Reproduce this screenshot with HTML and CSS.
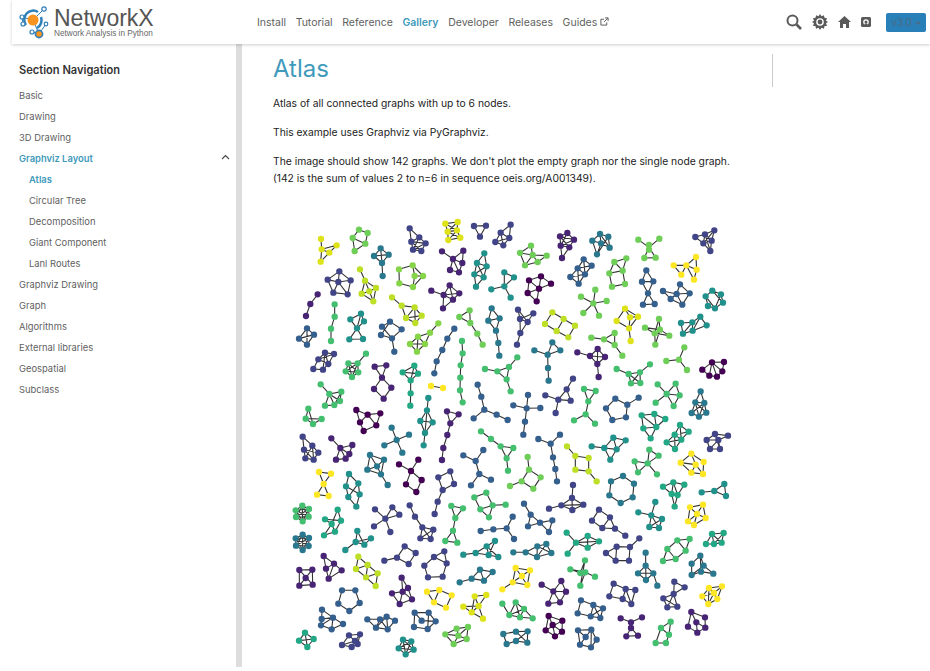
FILE: index.html
```html
<!DOCTYPE html>
<html>
	<head>
		<meta charset="utf-8">
		<title>Atlas — NetworkX</title>
		<link rel="stylesheet" href="styles.css">
	</head>
	<body>
		<header class="topbar">
			<a class="logo">
				<svg class="logo-mark" width="42" height="40" viewBox="12 2 42 40">
					<path class="logo-line" d="M33 20L44 9M33 20L22 17M22 17L23 24M33 20L39 34M39 34L32 32M39 34L46 24"/>
					<path class="logo-arc" d="M26 25A9 9 0 0 1 38 12M41 17A9 9 0 0 1 37 28"/>
					<circle class="logo-big" cx="33" cy="20" r="5.5"/>
					<circle class="logo-ring" cx="39" cy="34" r="3.6"/>
					<circle class="logo-ring-thin" cx="22" cy="17" r="2"/>
					<circle class="logo-ring-thin" cx="23" cy="24" r="2"/>
					<circle class="logo-ring-thin" cx="44" cy="9" r="2.2"/>
					<circle class="logo-ring-thin" cx="46" cy="24" r="1.8"/>
					<circle class="logo-ring-thin" cx="32" cy="32" r="2"/>
				</svg>
				<span class="logo-text">
					<strong>NetworkX</strong>
					<small>Network Analysis in Python</small>
				</span>
			</a>
			<nav class="topnav">
				<a>Install</a>
				<a>Tutorial</a>
				<a>Reference</a>
				<a class="active">Gallery</a>
				<a>Developer</a>
				<a>Releases</a>
				<a>Guides
					<svg class="ext" width="9" height="9" viewBox="0 0 10 10"><path d="M7.5 6v3H1V2.500h3.500M5.500 1H9v3.500M9 1L4.500 5.500"/></svg>
				</a>
			</nav>
			<div class="tools">
				<svg width="16" height="16" viewBox="0 0 16 16"><circle class="tool-line" cx="6.500" cy="6.500" r="5"/><path class="tool-line thick" d="M10.500 10.500L15 15"/></svg>
				<svg width="16" height="16" viewBox="0 0 16 16"><path class="tool-fill" d="M8 0l1.500 2.200L12 1.200l.4 2.600 2.600.4-1 2.500L16 8l-2 1.300 1 2.500-2.600.4-.4 2.600-2.500-1L8 16l-1.500-2.200-2.500 1-.4-2.600L1 11.800l1-2.500L0 8l2-1.300-1-2.500 2.600-.4.4-2.600 2.500 1z"/><circle class="tool-hole" cx="8" cy="8" r="3.800"/><circle class="tool-fill" cx="8" cy="8" r="2.400"/></svg>
				<svg width="13" height="12" viewBox="0 0 13 12"><path class="tool-fill" d="M6.500 0L13 6h-2v6H8V8H5v4H2V6H0z"/></svg>
				<svg width="10" height="10" viewBox="0 0 10 10"><rect class="tool-fill" width="10" height="10" rx="1.500"/><circle class="tool-hole" cx="5" cy="5" r="2.800"/><circle class="tool-fill" cx="5" cy="5" r="1.500"/><path class="tool-fill" d="M3.800 6.500h2.400V10H3.800z"/></svg>
				<button class="version">v3.0 <i class="caret"></i></button>
			</div>
		</header>

		<div class="page">
			<aside class="sidebar">
				<h4>Section Navigation</h4>
				<ul class="tree">
					<li>Basic</li>
					<li>Drawing</li>
					<li>3D Drawing</li>
					<li class="current open">Graphviz Layout
						<svg class="chev" width="9" height="6" viewBox="0 0 9 6"><path d="M1 5l3.500-3.500L8 5"/></svg>
					</li>
					<li class="sub current">Atlas</li>
					<li class="sub">Circular Tree</li>
					<li class="sub">Decomposition</li>
					<li class="sub">Giant Component</li>
					<li class="sub">Lanl Routes</li>
					<li>Graphviz Drawing</li>
					<li>Graph</li>
					<li>Algorithms</li>
					<li>External libraries</li>
					<li>Geospatial</li>
					<li>Subclass</li>
				</ul>
			</aside>

			<main class="content">
				<div class="article">
					<h1>Atlas</h1>
					<p>Atlas of all connected graphs with up to 6 nodes.</p>
					<p>This example uses Graphviz via PyGraphviz.</p>
					<p>The image should show 142 graphs. We don't plot the empty graph nor the single node graph. (142 is the sum of values 2 to n=6 in sequence oeis.org/A001349).</p>
				</div>
				<div class="toc-rule"></div>

				<svg class="atlas" width="500" height="467" viewBox="273 200 500 467">
					<!-- top left -->
					<g transform="translate(290 210) scale(.3333)">
						<g class="v95"><path class="e" d="M93 90L95 121L140 109L118 131L95 121L92 158L118 131"/><path class="n" d="M93 90h0M140 109h0M95 121h0M118 131h0M92 158h0"/></g>
						<g class="v8"><path class="e" d="M207 62L233 72L226 104L194 126L188 87L207 62M188 87L226 104"/><path class="n" d="M207 62h0M233 72h0M188 87h0M226 104h0M194 126h0"/></g>
						<g class="v4"><path class="e" d="M272 118L252 141L276 162L296 137L272 118L276 162L278 201M252 141L296 137"/><path class="n" d="M272 118h0M252 141h0M296 137h0M276 162h0M278 201h0"/></g>
						<g class="v2"><path class="e" d="M359 58L388 85L407 103L394 126L369 122L364 98L388 85M359 58L364 98L394 126M369 122L407 103M388 85L369 122M364 98L407 103"/><path class="n" d="M359 58h0M388 85h0M364 98h0M407 103h0M369 122h0M394 126h0"/></g>
						<g class="v95"><path class="e" d="M466 44L503 39L501 64L473 68L466 44L501 64L511 86L475 93L473 68L511 86M503 39L473 68M475 93L501 64"/><path class="n" d="M466 44h0M503 39h0M473 68h0M501 64h0M475 93h0M511 86h0"/></g>
						<g class="v2"><path class="e" d="M552 51L588 50L570 83L552 51"/><path class="n" d="M552 51h0M588 50h0M570 83h0"/></g>
						<g class="v2"><path class="e" d="M662 47L632 71L616 99L640 109L658 87L632 71M662 47L658 87M616 99L658 87M632 71L640 109"/><path class="n" d="M662 47h0M632 71h0M616 99h0M658 87h0M640 109h0"/></g>
						<g class="v1"><path class="e" d="M456 127L489 150L520 125L517 162L507 190L480 183L489 150L517 162M489 150L507 190"/><path class="n" d="M456 127h0M520 125h0M489 150h0M517 162h0M480 183h0M507 190h0"/></g>
						<g class="v5"><path class="e" d="M583 133L561 162L553 196L558 233L581 205L590 172L583 133M561 162L590 172L553 196L581 205L561 162"/><path class="n" d="M583 133h0M561 162h0M590 172h0M553 196h0M581 205h0M558 233h0"/></g>
						<g class="v5"><path class="e" d="M604 241L643 232L643 190L672 205L643 232L662 266"/><path class="n" d="M643 190h0M672 205h0M604 241h0M643 232h0M662 266h0"/></g>
						<g class="v2"><path class="e" d="M148 187L113 212L145 219L182 214L148 187L145 219L130 251L173 256L182 214M113 212L130 251M145 219L173 256"/><path class="n" d="M148 187h0M113 212h0M145 219h0M182 214h0M130 251h0M173 256h0"/></g>
						<g class="v9"><path class="e" d="M210 181L225 215L258 237L250 277L215 254L225 215L238 247L258 237M215 254L238 247L250 277"/><path class="n" d="M210 181h0M225 215h0M258 237h0M238 247h0M215 254h0M250 277h0"/></g>
						<g class="v8b"><path class="e" d="M327 181L368 169L374 201L369 234L328 223L327 181M368 169L399 201L369 234M374 201L399 201"/><path class="n" d="M327 181h0M368 169h0M374 201h0M399 201h0M328 223h0M369 234h0"/></g>
						<g class="v1"><path class="e" d="M424 245L461 258L479 229L508 253L489 272L459 298L461 258L508 253M479 229L489 272L461 258"/><path class="n" d="M424 245h0M479 229h0M461 258h0M508 253h0M489 272h0M459 298h0"/></g>
						<g class="v1"><path class="e" d="M83 256L61 285L48 321"/><path class="n" d="M83 256h0M61 285h0M48 321h0"/></g>
						<g class="v7"><path class="e" d="M134 286L134 323L123 359L123 396"/><path class="n" d="M134 286h0M134 323h0M123 359h0M123 396h0"/></g>
						<g class="v5"><path class="e" d="M213 314L181 331L201 358L213 314L222 337L201 358L178 391L219 390L201 358"/><path class="n" d="M213 314h0M181 331h0M222 337h0M201 358h0M178 391h0M219 390h0"/></g>
						<g class="v9"><path class="e" d="M306 265L335 290L374 295L395 320L376 342L348 327L335 290M374 295L348 327M374 295L376 342M395 320L348 327"/><path class="n" d="M306 265h0M335 290h0M374 295h0M395 320h0M348 327h0M376 342h0"/></g>
						<g class="v8"><path class="e" d="M539 304L508 324L541 342L539 304M541 342L562 374L578 407"/><path class="n" d="M539 304h0M508 324h0M541 342h0M562 374h0M578 407h0"/></g>
						<g class="v4"><path class="e" d="M605 298L595 335L629 328L605 298M595 335L618 365L629 328M618 365L625 402L628 440"/><path class="n" d="M605 298h0M595 335h0M629 328h0M618 365h0M625 402h0M628 440h0"/></g>
						<g class="v3"><path class="e" d="M276 353L300 338L335 361L306 388L273 378L300 338M276 353L306 388L313 428"/><path class="n" d="M276 353h0M300 338h0M335 361h0M273 378h0M306 388h0M313 428h0"/></g>
						<g class="v3"><path class="e" d="M51 358L27 389L72 377L51 358L51 407L72 377M27 389L51 407"/><path class="n" d="M51 358h0M27 389h0M72 377h0M51 407h0"/></g>
						<g class="v3"><path class="e" d="M493 359L472 389L457 423L440 457L433 493"/><path class="n" d="M493 359h0M472 389h0M457 423h0M440 457h0M433 493h0"/></g>
						<g class="v8b"><path class="e" d="M445 343L420 371L384 383L360 405L381 428L405 405L420 371M384 383L381 428M360 405L405 405M384 383L405 405"/><path class="n" d="M445 343h0M420 371h0M384 383h0M360 405h0M405 405h0M381 428h0"/></g>
						<g class="v7"><path class="e" d="M516 396L518 433L512 469L511 506L510 544L518 580"/><path class="n" d="M516 396h0M518 433h0M512 469h0M511 506h0M510 544h0M518 580h0"/></g>
						<g class="v2"><path class="e" d="M105 431L132 435L115 465L99 482L70 480L85 451L105 431L115 465M85 451L132 435M105 431L99 482M85 451L115 465"/><path class="n" d="M105 431h0M132 435h0M85 451h0M115 465h0M70 480h0M99 482h0"/></g>
						<g class="v7"><path class="e" d="M228 434L203 463L205 490L186 504L167 487L175 463L203 463L167 487M175 463L205 490M175 463L186 504M203 463L186 504M167 487L205 490"/><path class="n" d="M228 434h0M203 463h0M175 463h0M167 487h0M205 490h0M186 504h0"/></g>
						<g class="v1"><path class="e" d="M254 473L289 469L276 506L254 473M276 506L252 540L281 569L304 536L276 506"/><path class="n" d="M254 473h0M289 469h0M276 506h0M252 540h0M304 536h0M281 569h0"/></g>
						<g class="v6"><path class="e" d="M373 470L338 490L362 514L384 494L373 470L362 514L362 553L361 590M338 490L384 494"/><path class="n" d="M373 470h0M338 490h0M384 494h0M362 514h0M362 553h0M361 590h0"/></g>
						<g class="v10"><path class="e" d="M423 531L459 537"/><path class="n" d="M423 531h0M459 537h0"/></g>
						<g class="v7"><path class="e" d="M585 480L622 487L657 474L682 445M622 487L650 511L657 474M650 511L662 547"/><path class="n" d="M585 480h0M622 487h0M657 474h0M682 445h0M650 511h0M662 547h0"/></g>
						<g class="v3"><path class="e" d="M563 527L574 563L583 602L551 628M583 602L620 617L653 633"/><path class="n" d="M563 527h0M574 563h0M583 602h0M551 628h0M620 617h0M653 633h0"/></g>
						<g class="v7"><path class="e" d="M92 526L118 555L154 548L133 588L105 590L118 555L150 576L133 588L118 555M154 548L150 576"/><path class="n" d="M92 526h0M118 555h0M154 548h0M150 576h0M105 590h0M133 588h0"/></g>
						<g class="v7"><path class="e" d="M55 599L47 629L95 630L69 645L47 629M55 599L69 645"/><path class="n" d="M55 599h0M47 629h0M95 630h0M69 645h0"/></g>
						<g class="v0"><path class="e" d="M199 603L233 617L271 613L259 649L221 666L210 640L199 603M233 617L210 640M233 617L259 649"/><path class="n" d="M199 603h0M233 617h0M271 613h0M210 640h0M259 649h0M221 666h0"/></g>
						<g class="v5"><path class="e" d="M415 567L411 604L391 636L405 672L428 640L411 604L405 672L401 709M391 636L428 640"/><path class="n" d="M415 567h0M411 604h0M391 636h0M428 640h0M405 672h0M401 709h0"/></g>
						<g class="v1"><path class="e" d="M471 607L506 616L481 643L471 607M481 643L472 678L460 717L456 753"/><path class="n" d="M471 607h0M506 616h0M481 643h0M472 678h0M460 717h0M456 753h0"/></g>
						<g class="v4"><path class="e" d="M305 656L320 693L357 677M283 709L320 693L337 731"/><path class="n" d="M305 656h0M357 677h0M320 693h0M283 709h0M337 731h0"/></g>
						<g class="v7"><path class="e" d="M573 667L603 690L632 712L670 717L650 748L632 712M650 748L654 785"/><path class="n" d="M573 667h0M603 690h0M632 712h0M670 717h0M650 748h0M654 785h0"/></g>
					</g>

					<!-- top right -->
					<g transform="translate(510 210) scale(.3333)">
						<g class="v8"><path class="e" d="M63 110L30 132L45 169L83 159L110 140L68 138L63 110M30 132L68 138L45 169M68 138L83 159"/><path class="n" d="M63 110h0M30 132h0M68 138h0M110 140h0M45 169h0M83 159h0"/></g>
						<g class="v1"><path class="e" d="M150 82L172 72L192 92L178 115L152 110L150 82L178 115M172 72L152 110M150 82L192 92M152 110L192 92M152 110L156 147L178 115"/><path class="n" d="M150 82h0M172 72h0M192 92h0M152 110h0M178 115h0M156 147h0"/></g>
						<g class="v4"><path class="e" d="M270 75L247 95L261 136L273 103L299 116L295 83L270 75L273 103L247 95M295 83L261 136M270 75L299 116"/><path class="n" d="M270 75h0M247 95h0M295 83h0M273 103h0M299 116h0M261 136h0"/></g>
						<g class="v8"><path class="e" d="M385 92L417 115L448 89M417 115L403 147L437 146L417 115"/><path class="n" d="M417 108h0M417 122h0M385 92h0M448 89h0M403 147h0M437 146h0"/></g>
						<g class="v2"><path class="e" d="M613 64L585 76L556 84L580 103L601 126L605 95L613 64L580 103L585 76L605 95L580 103M585 76L601 126"/><path class="n" d="M613 64h0M585 76h0M556 84h0M605 95h0M580 103h0M601 126h0"/></g>
						<g class="v10"><path class="e" d="M558 144L529 169L491 169L514 197L529 169L560 182L558 144M529 169L552 212L560 182"/><path class="n" d="M558 144h0M491 169h0M529 169h0M560 182h0M514 197h0M552 212h0"/></g>
						<g class="v3"><path class="e" d="M221 151L203 178L181 204L206 224L225 196L245 170L221 151L225 196M203 178L245 170M203 178L225 196L181 204M203 178L206 224"/><path class="n" d="M221 151h0M203 178h0M245 170h0M181 204h0M225 196h0M206 224h0"/></g>
						<g class="v8"><path class="e" d="M349 148L313 159L298 193L306 233L345 225L338 185L349 148M313 159L338 185L298 193"/><path class="n" d="M349 148h0M313 159h0M338 185h0M298 193h0M306 233h0M345 225h0"/></g>
						<g class="v3"><path class="e" d="M409 184L396 218L414 253L430 217L409 184M396 218L430 217M414 253L399 287L434 285L414 253"/><path class="n" d="M409 184h0M396 218h0M430 217h0M414 253h0M399 287h0M434 285h0"/></g>
						<g class="v0"><path class="e" d="M57 214L93 202L123 224L87 239L93 202M57 214L87 239L53 252L57 214M53 252L80 277L87 239"/><path class="n" d="M57 214h0M93 202h0M123 224h0M53 252h0M87 239h0M80 277h0"/></g>
						<g class="v3"><path class="e" d="M459 246L500 255L510 226L539 253L517 287L482 270L459 246M482 270L500 255L539 253M500 255L517 287"/><path class="n" d="M459 246h0M510 226h0M539 253h0M482 270h0M500 255h0M517 287h0"/></g>
						<g class="v5"><path class="e" d="M607 245L633 256L639 281L615 298L594 291L587 262L607 245M607 245L639 281M633 256L615 298M587 262L615 298"/><path class="n" d="M607 245h0M587 262h0M633 256h0M594 291h0M639 281h0M615 298h0"/></g>
						<g class="v8"><path class="e" d="M256 242L250 283L213 263M290 276L250 283L220 312M250 283L267 320"/><path class="n" d="M256 242h0M213 263h0M290 276h0M250 283h0M220 312h0M267 320h0"/></g>
						<g class="v2"><path class="e" d="M24 302L30 330L53 339L24 302M70 313L53 339L31 372L30 330L70 313M31 372L21 407"/><path class="n" d="M24 302h0M70 313h0M53 339h0M30 330h0M31 372h0M21 407h0"/></g>
						<g class="v9"><path class="e" d="M127 310L161 330L195 350L175 385L140 366L105 345L127 310M161 330L140 366"/><path class="n" d="M127 310h0M161 330h0M105 345h0M195 350h0M140 366h0M175 385h0"/></g>
						<g class="v95"><path class="e" d="M345 299L384 323L360 325L345 299L320 336L357 358L362 396M360 325L357 358L384 323"/><path class="n" d="M345 299h0M384 323h0M360 325h0M320 336h0M357 358h0M362 396h0"/></g>
						<g class="v8"><path class="e" d="M447 330L434 373L405 356L450 362L478 380L434 373L436 407L450 362L447 330"/><path class="n" d="M447 330h0M405 356h0M450 362h0M434 373h0M478 380h0M436 407h0"/></g>
						<g class="v5"><path class="e" d="M571 323L547 340L513 342L519 374L548 365L590 349L571 323L548 365L547 340L519 374"/><path class="n" d="M571 323h0M513 342h0M547 340h0M590 349h0M519 374h0M548 365h0"/></g>
						<g class="v8"><path class="e" d="M244 386L282 391L314 372L314 408L282 391M314 408L337 440"/><path class="n" d="M244 386h0M282 391h0M314 372h0M314 408h0M337 440h0"/></g>
						<g class="v4"><path class="e" d="M127 400L113 437L151 424L127 400M73 424L113 437L114 477L116 515"/><path class="n" d="M127 400h0M73 424h0M113 437h0M151 424h0M114 477h0M116 515h0"/></g>
						<g class="v1"><path class="e" d="M202 430L240 441L263 420L285 444L262 465L240 441L285 444M263 420L262 465L266 504"/><path class="n" d="M263 420h0M202 430h0M240 441h0M285 444h0M262 465h0M266 504h0"/></g>
						<g class="v8"><path class="e" d="M523 415L507 452L469 456M507 452L531 483"/><path class="n" d="M523 415h0M469 456h0M507 452h0M531 483h0"/></g>
						<g class="v0"><path class="e" d="M606 460L642 459L637 487L621 503L598 500L577 482L606 460L637 487M606 460L598 500M606 460L621 503"/><path class="n" d="M606 460h0M642 459h0M577 482h0M637 487h0M598 500h0M621 503h0"/></g>
						<g class="v7"><path class="e" d="M320 480L356 495L390 490L420 466M356 495L363 523L391 522L390 490L363 523M356 495L391 522"/><path class="n" d="M420 466h0M320 480h0M390 490h0M356 495h0M363 523h0M391 522h0"/></g>
						<g class="v2"><path class="e" d="M189 509L170 541L145 572L106 559M170 541L182 575L145 572L137 612"/><path class="n" d="M189 509h0M170 541h0M106 559h0M145 572h0M182 575h0M137 612h0"/></g>
						<g class="v7"><path class="e" d="M222 540L257 546L235 577L222 540M235 577L227 616L192 634M227 616L255 644"/><path class="n" d="M222 540h0M257 546h0M235 577h0M227 616h0M192 634h0M255 644h0"/></g>
						<g class="v7"><path class="e" d="M443 526L470 555L497 524L509 559L491 591L470 555L509 559M470 555L437 581"/><path class="n" d="M443 526h0M497 524h0M470 555h0M509 559h0M437 581h0M491 591h0"/></g>
						<g class="v4"><path class="e" d="M572 547L556 580L545 612L567 623L589 611L583 582L572 547M556 580L583 582L545 612M556 580L589 611M556 580L567 623M583 582L567 623"/><path class="n" d="M572 547h0M556 580h0M583 582h0M545 612h0M589 611h0M567 623h0"/></g>
						<g class="v3"><path class="e" d="M54 558L50 598L45 638L40 677M10 589L50 598L91 597"/><path class="n" d="M54 558h0M10 589h0M50 598h0M91 597h0M45 638h0M40 677h0"/></g>
						<g class="v3"><path class="e" d="M386 566L352 587L348 625L307 633L288 598L316 569L352 587"/><path class="n" d="M386 566h0M352 587h0M316 569h0M288 598h0M348 625h0M307 633h0"/></g>
						<g class="v6"><path class="e" d="M395 619L433 615L466 630L439 654L422 688L400 658L395 619L439 654L433 615M400 658L439 654"/><path class="n" d="M395 619h0M433 615h0M466 630h0M400 658h0M439 654h0M422 688h0"/></g>
					</g>

					<!-- bottom right -->
					<g transform="translate(510 430) scale(.3333)">
						<g class="v6"><path class="e" d="M510 -12L536 8L514 32L495 60L470 40L494 17L510 -12L514 32L494 17L495 60M536 8L494 17M470 40L514 32"/><path class="n" d="M510 -12h0M536 8h0M470 40h0M494 17h0M514 32h0M495 60h0"/></g>
						<g class="v2"><path class="e" d="M615 15L654 20L625 33L600 60L590 33L615 15L630 60L625 33L615 15M590 33L625 33M600 60L630 60"/><path class="n" d="M615 15h0M654 20h0M590 33h0M625 33h0M600 60h0M630 60h0"/></g>
						<g class="v3"><path class="e" d="M150 17L122 44L85 30M122 44L129 85L136 120L141 157"/><path class="n" d="M150 17h0M85 30h0M122 44h0M129 85h0M136 120h0M141 157h0"/></g>
						<g class="v9"><path class="e" d="M171 52L196 81L236 87L236 127L196 122L196 81M236 127L260 157"/><path class="n" d="M171 52h0M196 81h0M236 87h0M196 122h0M236 127h0M260 157h0"/></g>
						<g class="v5"><path class="e" d="M245 52L283 57L310 26L347 34L320 61L310 26M283 57L320 61L301 92L283 57"/><path class="n" d="M310 26h0M347 34h0M245 52h0M283 57h0M320 61h0M301 92h0"/></g>
						<g class="v7"><path class="e" d="M418 62L446 80L413 103L418 62M374 97L413 103L384 130L374 97M413 103L441 136"/><path class="n" d="M418 62h0M446 80h0M374 97h0M413 103h0M384 130h0M441 136h0"/></g>
						<g class="v10"><path class="e" d="M544 74L512 101L544 131L579 135L581 99L544 74L557 107L579 135M557 107L544 131M512 101L557 107"/><path class="n" d="M544 74h0M512 101h0M581 99h0M557 107h0M544 131h0M579 135h0"/></g>
						<g class="v8"><path class="e" d="M53 84L57 122L92 145L70 179L35 157L57 122M35 157L0 171"/><path class="n" d="M53 84h0M57 122h0M92 145h0M35 157h0M70 179h0M0 171h0"/></g>
						<g class="v4"><path class="e" d="M339 141L372 164L368 205L332 222L298 199L303 157L339 141"/><path class="n" d="M339 141h0M303 157h0M372 164h0M298 199h0M368 205h0M332 222h0"/></g>
						<g class="v6"><path class="e" d="M490 160L459 173L485 195L503 198L523 167L490 160L485 195L494 233L503 198L490 160"/><path class="n" d="M490 160h0M459 173h0M523 167h0M485 195h0M503 198h0M494 233h0"/></g>
						<g class="v5"><path class="e" d="M575 190L613 186L643 165L648 201L613 186"/><path class="n" d="M643 165h0M575 190h0M613 186h0M648 201h0"/></g>
						<g class="v2"><path class="e" d="M189 168L186 207L154 229L117 239M154 229L220 227L186 207L187 243L154 229M187 243L220 227"/><path class="n" d="M189 168h0M186 207h0M117 239h0M154 229h0M220 227h0M187 243h0"/></g>
						<g class="v10"><path class="e" d="M579 227L540 235L534 277L552 288L587 267L579 227L561 255L540 235M561 255L587 267M561 255L552 288M561 255L534 277"/><path class="n" d="M579 227h0M540 235h0M561 255h0M587 267h0M534 277h0M552 288h0"/></g>
						<g class="v5"><path class="e" d="M436 219L424 259L385 250M424 259L456 270L447 297L418 294L424 259L447 297M456 270L418 294"/><path class="n" d="M436 219h0M385 250h0M424 259h0M456 270h0M418 294h0M447 297h0"/></g>
						<g class="v3"><path class="e" d="M42 224L62 257L90 281L127 274L117 309L90 281L54 292L62 257"/><path class="n" d="M42 224h0M62 257h0M127 274h0M90 281h0M54 292h0M117 309h0"/></g>
						<g class="v2"><path class="e" d="M267 242L300 265L315 299L346 320M267 242L246 275L277 297L315 299M300 265L277 297"/><path class="n" d="M267 242h0M300 265h0M246 275h0M277 297h0M315 299h0M346 320h0"/></g>
						<g class="v3"><path class="e" d="M8 263L-10 298L-50 301L-88 306M-10 298L12 330"/><path class="n" d="M8 263h0M-10 298h0M-50 301h0M-88 306h0M12 330h0"/></g>
						<g class="v7"><path class="e" d="M539 330L502 334L472 360L459 396L497 390L472 360M502 334L527 365L539 330M527 365L497 390"/><path class="n" d="M539 330h0M502 334h0M472 360h0M527 365h0M497 390h0M459 396h0"/></g>
						<g class="v6"><path class="e" d="M641 312L606 315L588 345L612 345L635 341L641 312L612 345L606 315L635 341"/><path class="n" d="M641 312h0M606 315h0M588 345h0M612 345h0M635 341h0"/></g>
						<g class="v6"><path class="e" d="M170 311L198 341L233 321L267 337L233 356L198 341L267 337M198 341L173 374M233 321L233 356"/><path class="n" d="M170 311h0M233 321h0M198 341h0M267 337h0M173 374h0M233 356h0"/></g>
						<g class="v2"><path class="e" d="M388 328L360 354L320 353L288 372L317 395L357 395L360 354M320 353L317 395"/><path class="n" d="M388 328h0M360 354h0M320 353h0M288 372h0M317 395h0M357 395h0"/></g>
						<g class="v4"><path class="e" d="M10 370L47 370L82 352L109 345L124 372L81 384L47 370M82 352L81 384M82 352L124 372M109 345L81 384"/><path class="n" d="M109 345h0M82 352h0M47 370h0M10 370h0M124 372h0M81 384h0"/></g>
						<g class="v4"><path class="e" d="M407 371L407 410L384 433L408 453L430 433L407 410L408 453M384 433L430 433L442 470"/><path class="n" d="M407 371h0M407 410h0M384 433h0M430 433h0M408 453h0M442 470h0"/></g>
						<g class="v4"><path class="e" d="M571 380L545 404L545 438L573 428L610 434L581 410L571 380L573 428L581 410L545 438"/><path class="n" d="M571 380h0M581 410h0M545 404h0M573 428h0M610 434h0M545 438h0"/></g>
						<g class="v7"><path class="e" d="M225 394L211 432L181 421L226 430L255 443M226 430L211 470L225 394"/><path class="n" d="M225 394h0M181 421h0M211 432h0M226 430h0M255 443h0M211 470h0"/></g>
						<g class="v10"><path class="e" d="M17 417L60 424L52 468L8 460L17 417L52 468M60 424L8 460L-23 481"/><path class="n" d="M17 417h0M60 424h0M36 441h0M8 460h0M52 468h0M-23 481h0"/></g>
						<g class="v1"><path class="e" d="M154 456L130 487L95 467M130 487L168 488L150 520L115 524L130 487L150 520M154 456L168 488"/><path class="n" d="M154 456h0M95 467h0M130 487h0M168 488h0M115 524h0M150 520h0"/></g>
						<g class="v2"><path class="e" d="M311 464L347 480L376 483L364 525L338 510L298 502L311 464M347 480L338 510M347 480L364 525"/><path class="n" d="M311 464h0M347 480h0M376 483h0M298 502h0M338 510h0M364 525h0"/></g>
						<g class="v2"><path class="e" d="M493 458L524 475L491 495L493 458M491 495L460 508L472 535L502 533L491 495L472 535M460 508L502 533"/><path class="n" d="M493 458h0M524 475h0M491 495h0M460 508h0M472 535h0M502 533h0"/></g>
						<g class="v10"><path class="e" d="M636 472L597 477L577 502L595 525L622 510L636 472L612 492L597 477L622 510L612 492L595 525L597 477M577 502L612 492"/><path class="n" d="M636 472h0M597 477h0M612 492h0M577 502h0M622 510h0M595 525h0"/></g>
						<g class="v7"><path class="e" d="M-23 524L-2 558L30 565L68 568L42 540L17 520L30 565L42 540L-2 558L17 520"/><path class="n" d="M17 520h0M42 540h0M-23 524h0M-2 558h0M30 565h0M68 568h0"/></g>
						<g class="v3"><path class="e" d="M213 514L250 528L279 538L271 567L242 562L203 553L213 514M250 528L242 562L279 538M250 528L271 567"/><path class="n" d="M213 514h0M250 528h0M279 538h0M203 553h0M242 562h0M271 567h0"/></g>
						<g class="v0"><path class="e" d="M116 561L157 575L156 608L135 622L107 604L116 561L128 588L156 608M128 588L135 622M157 575L107 604"/><path class="n" d="M116 561h0M157 575h0M128 588h0M107 604h0M156 608h0M135 622h0"/></g>
						<g class="v1"><path class="e" d="M332 568L363 580L396 565M363 580L363 597L349 622L384 620L363 597"/><path class="n" d="M332 568h0M396 565h0M363 580h0M363 597h0M349 622h0M384 620h0"/></g>
						<g class="v7"><path class="e" d="M482 578L453 597L477 617L482 578M477 617L468 642L437 642L453 597"/><path class="n" d="M482 578h0M453 597h0M477 617h0M437 642h0M468 642h0"/></g>
						<g class="v1"><path class="e" d="M544 549L585 565L586 596L562 611L534 593L544 549L559 580L586 596M559 580L562 611"/><path class="n" d="M544 549h0M585 565h0M559 580h0M534 593h0M586 596h0M562 611h0"/></g>
						<g class="v4"><path class="e" d="M18 608L53 607L52 641L18 636L-10 645L-20 615L18 608L52 641M53 607L18 636"/><path class="n" d="M53 607h0M18 608h0M-20 615h0M-10 645h0M18 636h0M52 641h0"/></g>
						<g class="v3"><path class="e" d="M204 604L244 602L260 632L243 655L210 647L204 604L227 624L244 602L243 655M227 624L210 647"/><path class="n" d="M204 604h0M244 602h0M227 624h0M260 632h0M210 647h0M243 655h0"/></g>
					</g>

					<!-- bottom left -->
					<g transform="translate(290 430) scale(.3333)">
						<g class="v2"><path class="e" d="M38 23L67 50L85 71L71 92L46 88L42 62L38 23M42 62L85 71M67 50L46 88M42 62L71 92M67 50L71 92"/><path class="n" d="M38 23h0M67 50h0M42 62h0M85 71h0M46 88h0M71 92h0"/></g>
						<g class="v1"><path class="e" d="M124 28L151 57L187 48L178 75L167 89L138 92L151 57L178 75M151 57L167 89"/><path class="n" d="M124 28h0M151 57h0M187 48h0M178 75h0M138 92h0M167 89h0"/></g>
						<g class="v4"><path class="e" d="M240 78L282 92L273 136L232 122L240 78L261 112L282 92M261 112L232 122M261 112L273 136L293 168"/><path class="n" d="M240 78h0M282 92h0M261 112h0M232 122h0M273 136h0M293 168h0"/></g>
						<g class="v0"><path class="e" d="M385 92L363 126L327 106M363 126L395 153L379 189L348 166L363 126"/><path class="n" d="M385 92h0M327 106h0M363 126h0M395 153h0M348 166h0M379 189h0"/></g>
						<g class="v2"><path class="e" d="M481 127L445 145L458 183L492 165L481 127M458 183L443 218L434 255"/><path class="n" d="M481 127h0M445 145h0M492 165h0M458 183h0M443 218h0M434 255h0"/></g>
						<g class="v3"><path class="e" d="M580 63L557 96L520 79M557 96L568 135L603 152M568 135L543 169"/><path class="n" d="M580 63h0M520 79h0M557 96h0M568 135h0M603 152h0M543 169h0"/></g>
						<g class="v10"><path class="e" d="M87 129L123 134L101 165L87 129M101 165L81 197L116 201L101 165"/><path class="n" d="M87 129h0M123 134h0M101 165h0M81 197h0M116 201h0"/></g>
						<g class="v5"><path class="e" d="M177 135L168 172L175 204L199 233L209 196L205 163L177 135M168 172L209 196M205 163L175 204"/><path class="n" d="M177 135h0M168 172h0M205 163h0M175 204h0M209 196h0M199 233h0"/></g>
						<g class="v7"><path class="e" d="M589 191L553 205L571 241L597 265L608 229L589 191M571 241L608 229L647 227"/><path class="n" d="M589 191h0M553 205h0M608 229h0M647 227h0M571 241h0M597 265h0"/></g>
						<g class="v7"><path class="e" d="M37 230L57 240L56 263L38 277L18 264L17 244L37 230L56 263M57 240L38 277M17 244L56 263M18 264L57 240M37 230L18 264M17 244L38 277M37 230L38 277M17 244L57 240M18 264L56 263"/><path class="n" d="M37 230h0M57 240h0M17 244h0M56 263h0M18 264h0M38 277h0"/></g>
						<g class="v2"><path class="e" d="M255 241L286 269L252 292M307 235L286 269L328 257L307 235M286 269L301 309"/><path class="n" d="M255 241h0M307 235h0M286 269h0M328 257h0M252 292h0M301 309h0"/></g>
						<g class="v2"><path class="e" d="M359 229L375 263L397 295L430 302L422 330L391 328L397 295L422 330M430 302L391 328"/><path class="n" d="M359 229h0M375 263h0M397 295h0M430 302h0M391 328h0M422 330h0"/></g>
						<g class="v7"><path class="e" d="M484 231L519 238L496 267L484 231M496 267L489 305L466 336L502 341L489 305"/><path class="n" d="M484 231h0M519 238h0M496 267h0M489 305h0M466 336h0M502 341h0"/></g>
						<g class="v6"><path class="e" d="M143 242L125 285L105 271L153 275L143 242M153 275L135 308L102 319L125 285L135 308"/><path class="n" d="M143 242h0M105 271h0M125 285h0M153 275h0M102 319h0M135 308h0"/></g>
						<g class="v4"><path class="e" d="M38 317L57 327L56 351L38 363L18 350L17 328L38 317L56 351M57 327L38 363M17 328L56 351M18 350L57 327M38 317L18 350M17 328L38 363M38 317L38 363M17 328L57 327M18 350L56 351"/><path class="n" d="M38 317h0M17 328h0M57 327h0M18 350h0M56 351h0M38 363h0"/></g>
						<g class="v5"><path class="e" d="M202 306L197 339L166 363M202 306L223 347L197 339L243 328L223 347"/><path class="n" d="M202 306h0M197 339h0M243 328h0M223 347h0M166 363h0"/></g>
						<g class="v5"><path class="e" d="M520 377L557 372L590 352L615 336L596 378L557 372M590 352L625 384L596 378M590 352L596 378"/><path class="n" d="M615 336h0M590 352h0M520 377h0M557 372h0M596 378h0M625 384h0"/></g>
						<g class="v2"><path class="e" d="M283 395L321 386L344 352L377 372L356 405L321 386"/><path class="n" d="M344 352h0M377 372h0M283 395h0M321 386h0M356 405h0"/></g>
						<g class="v1"><path class="e" d="M101 381L108 419L116 449L132 404L101 381M108 419L132 404L155 424L116 449"/><path class="n" d="M101 381h0M132 404h0M108 419h0M155 424h0M116 449h0"/></g>
						<g class="v2"><path class="e" d="M432 384L463 367L470 403L432 384L403 410L414 445L458 443L470 403"/><path class="n" d="M432 384h0M463 367h0M470 403h0M403 410h0M414 445h0M458 443h0"/></g>
						<g class="v9"><path class="e" d="M205 383L233 408L263 433L228 445L198 420L205 383M233 408L198 420M233 408L228 445L257 471L263 433"/><path class="n" d="M205 383h0M233 408h0M198 420h0M263 433h0M228 445h0M257 471h0"/></g>
						<g class="v1"><path class="e" d="M28 423L67 422L68 467L28 470L28 423L68 467M67 422L28 470"/><path class="n" d="M28 423h0M67 422h0M47 447h0M28 470h0M68 467h0"/></g>
						<g class="v4"><path class="e" d="M509 460L545 449L570 422L608 429L582 455L545 449M570 422L582 455"/><path class="n" d="M570 422h0M608 429h0M545 449h0M582 455h0M509 460h0"/></g>
						<g class="v1"><path class="e" d="M335 446L338 488L306 493L329 525L366 511L338 488L354 477L335 446M354 477L366 511M338 488L329 525"/><path class="n" d="M335 446h0M354 477h0M338 488h0M306 493h0M366 511h0M329 525h0"/></g>
						<g class="v10"><path class="e" d="M411 488L448 483L485 499L468 536L432 520L411 488M432 520L448 483"/><path class="n" d="M411 488h0M448 483h0M485 499h0M432 520h0M468 536h0"/></g>
						<g class="v95"><path class="e" d="M554 502L589 498L566 531L554 502L545 550L579 569L566 531L520 533L545 550L566 531"/><path class="n" d="M554 502h0M589 498h0M566 531h0M520 533h0M545 550h0M579 569h0"/></g>
						<g class="v3"><path class="e" d="M156 484L196 484L209 522L178 546L145 524L156 484"/><path class="n" d="M156 484h0M196 484h0M145 524h0M209 522h0M178 546h0"/></g>
						<g class="v3"><path class="e" d="M96 542L95 570L93 589L125 601L129 566L96 542M95 570L129 566L159 585L125 601M93 589L129 566"/><path class="n" d="M96 542h0M95 570h0M129 566h0M93 589h0M159 585h0M125 601h0"/></g>
						<g class="v3"><path class="e" d="M374 551L416 551L437 577L413 600L372 594L374 551L395 575L437 577M416 551L413 600"/><path class="n" d="M374 551h0M416 551h0M395 575h0M437 577h0M372 594h0M413 600h0"/></g>
						<g class="v3"><path class="e" d="M232 571L270 571L258 596L232 571M270 571L290 563L315 575L293 601L258 596L290 563L293 601M270 571L293 601"/><path class="n" d="M232 571h0M290 563h0M270 571h0M315 575h0M258 596h0M293 601h0"/></g>
						<g class="v8"><path class="e" d="M534 594L500 599L466 616L491 645L530 630L534 594L505 620L500 599M466 616L505 620L491 645M505 620L530 630"/><path class="n" d="M534 594h0M500 599h0M466 616h0M505 620h0M530 630h0M491 645h0"/></g>
						<g class="v6"><path class="e" d="M45 611L27 635L52 654L71 630L45 611L52 654M27 635L71 630"/><path class="n" d="M45 611h0M27 635h0M71 630h0M52 654h0"/></g>
						<g class="v2"><path class="e" d="M177 619L210 616L195 636L177 619L156 648L185 654L203 645L210 616M195 636L185 654M195 636L156 648"/><path class="n" d="M177 619h0M210 616h0M195 636h0M156 648h0M185 654h0M203 645h0"/></g>
						<g class="v5"><path class="e" d="M339 632L364 637L371 662L347 676L326 658L339 632L371 662M364 637L347 676M326 658L364 637M339 632L347 676M326 658L371 662"/><path class="n" d="M339 632h0M364 637h0M326 658h0M371 662h0M347 676h0"/></g>
					</g>
				</svg>
			</main>
		</div>
	</body>
</html>
```

FILE: styles.css
```css
html, body{
	margin: 0;
	padding: 0;
	height: 100%;
	overflow: hidden;
	background: #fff;
}
body{
	font-family: "Inter", "Liberation Sans", sans-serif;
	color: #333;
}
ul, h1, h4, p{
	margin: 0;
	padding: 0;
}

/* top bar */
.topbar{
	display: flex;
	align-items: center;
	height: 44px;
	margin-left: 12px;
	box-shadow: 0 1px 3px rgba(0,0,0,0.2);
	position: relative;
}
.logo{
	display: flex;
	align-items: center;
	width: 245px;
	flex: none;
}
.logo-mark{
	flex: none;
}
.logo-text{
	display: flex;
	flex-direction: column;
	margin-top: 2px;
}
.logo-text strong{
	font-family: "Liberation Sans", sans-serif;
	font-weight: normal;
	font-size: 23px;
	line-height: 21px;
	color: #555;
}
.logo-text small{
	font-family: "Liberation Sans", sans-serif;
	font-size: 8.200px;
	line-height: 10px;
	color: #666;
}
.logo-line{
	fill: none;
	stroke: #2f7fb8;
	stroke-width: 1;
}
.logo-arc{
	fill: none;
	stroke: #2f7fb8;
	stroke-width: 2.5;
}
.logo-big{
	fill: #f7931e;
}
.logo-ring{
	fill: #f7931e;
	stroke: #2f7fb8;
	stroke-width: 1.6;
}
.logo-ring-thin{
	fill: #fff;
	stroke: #2f7fb8;
	stroke-width: 1.2;
}
.topnav{
	display: flex;
	gap: 9.600px;
	font-size: 10.500px;
	color: #5f5f5f;
}
.topnav .active{
	color: #3f9abb;
	font-weight: 600;
}
.ext{
	fill: none;
	stroke: #5f5f5f;
	stroke-width: 1.1;
}
.tools{
	display: flex;
	align-items: center;
	gap: 10px;
	margin-left: auto;
	margin-right: 4px;
}
.tool-fill{
	fill: #5a5a5a;
}
.tool-hole{
	fill: #fff;
}
.tool-line{
	fill: none;
	stroke: #5a5a5a;
	stroke-width: 2;
}
.tool-line.thick{
	stroke-width: 2.6;
}
.version{
	width: 40px;
	height: 19px;
	margin-left: 5px;
	padding: 0;
	border: none;
	border-radius: 2px;
	background: #2980b9;
	color: #496a82;
	font-family: inherit;
	font-size: 10px;
}
.caret{
	display: inline-block;
	border: 3px solid transparent;
	border-top-color: #496a82;
	border-bottom: none;
	vertical-align: middle;
}

/* left side */
.page{
	display: flex;
	height: 623px;
}
.sidebar{
	flex: none;
	box-sizing: border-box;
	width: 242px;
	padding: 18.500px 6px 0 19px;
	border-right: 6px solid #ddd;
}
.sidebar h4{
	font-size: 11.100px;
	line-height: 15px;
	font-weight: 600;
	color: #333;
	margin-bottom: 7px;
}
.tree{
	list-style: none;
	font-size: 9.400px;
	color: #5f5f5f;
}
.tree li{
	position: relative;
	line-height: 21px;
	height: 21px;
}
.tree .sub{
	padding-left: 10px;
}
.tree .current{
	color: #3f9abb;
	font-weight: 600;
}
.chev{
	position: absolute;
	right: 0;
	top: 6px;
	fill: none;
	stroke: #444;
	stroke-width: 1.100;
}

/* article */
.content{
	position: relative;
	flex: 1;
	padding-left: 31px;
	min-width: 0;
}
.article{
	width: 470px;
	font-size: 10.300px;
	line-height: 17px;
	color: #222;
}
.article h1{
	font-size: 24px;
	line-height: 32px;
	font-weight: 400;
	color: #3f9abb;
	margin: 9px 0 10px;
}
.article p{
	margin-bottom: 12px;
}
.toc-rule{
	position: absolute;
	left: 530px;
	top: 10px;
	width: 1px;
	height: 33px;
	background: #ccc;
}
.atlas{
	display: block;
	margin-top: 1px;
}

/* graph atlas */
.e{
	fill: none;
	stroke: #333;
	stroke-width: 3.300;
	stroke-linejoin: round;
}
.n{
	fill: none;
	stroke: currentColor;
	stroke-width: 19;
	stroke-linecap: round;
}
.v0{ color: #440154; }
.v1{ color: #482475; }
.v2{ color: #414487; }
.v3{ color: #355f8d; }
.v4{ color: #2a788e; }
.v5{ color: #21918c; }
.v6{ color: #22a884; }
.v7{ color: #44bf70; }
.v8{ color: #6ece58; }
.v8b{ color: #86d549; }
.v9{ color: #bddf26; }
.v95{ color: #dde318; }
.v10{ color: #fde725; }
```
